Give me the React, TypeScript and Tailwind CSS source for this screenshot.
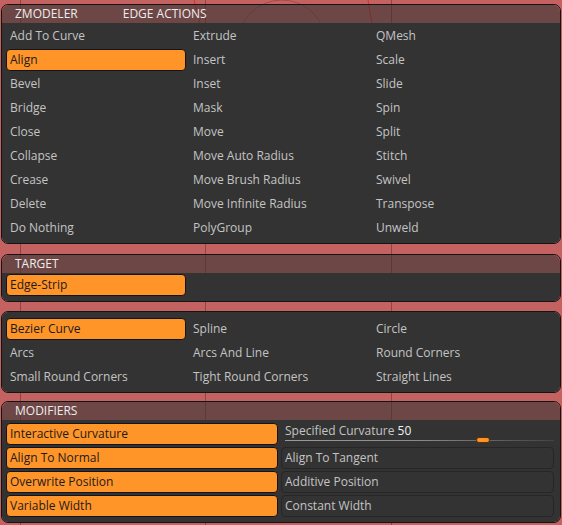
const edgeActions = [
  'Add To Curve', 'Extrude', 'QMesh',
  'Align', 'Insert', 'Scale',
  'Bevel', 'Inset', 'Slide',
  'Bridge', 'Mask', 'Spin',
  'Close', 'Move', 'Split',
  'Collapse', 'Move Auto Radius', 'Stitch',
  'Crease', 'Move Brush Radius', 'Swivel',
  'Delete', 'Move Infinite Radius', 'Transpose',
  'Do Nothing', 'PolyGroup', 'Unweld',
]

const curveTypes = [
  'Bezier Curve', 'Spline', 'Circle',
  'Arcs', 'Arcs And Line', 'Round Corners',
  'Small Round Corners', 'Tight Round Corners', 'Straight Lines',
]

const modifiers = [
  { on: 'Interactive Curvature', off: null },
  { on: 'Align To Normal', off: 'Align To Tangent' },
  { on: 'Overwrite Position', off: 'Additive Position' },
  { on: 'Variable Width', off: 'Constant Width' },
]

function Item({ label, active }: { label: string; active?: boolean }) {
  return (
    <div className="h-[24px] py-[1px]">
      <div
        className={
          active
            ? 'h-[22px] flex items-center pl-[3px] rounded-[4px] border border-[#141414] bg-[#ff9428] text-[#1b1b1b]'
            : 'h-[22px] flex items-center pl-[3px] border border-transparent text-[#c4c4c4]'
        }
      >
        {label}
      </div>
    </div>
  )
}

function Header({ title, sub }: { title: string; sub?: string }) {
  return (
    <div className="h-[18px] flex items-center bg-[#333333]/60 rounded-t-[7px] text-[#ededed] pl-[13px] gap-[45px]">
      <span>{title}</span>
      {sub && <span>{sub}</span>}
    </div>
  )
}

function Panel({ children, className = '' }: { children: React.ReactNode; className?: string }) {
  return (
    <div className={`w-[560px] ml-[1px] border border-[#141414] rounded-[7px] overflow-hidden ${className}`}>
      {children}
    </div>
  )
}

function Backdrop() {
  return (
    <svg className="absolute inset-0" width="562" height="525" viewBox="0 0 562 525">
      <line x1="20.5" y1="0" x2="20.5" y2="525" stroke="#8e4545" strokeWidth="1" />
      <line x1="205.5" y1="0" x2="205.5" y2="525" stroke="#8e4545" strokeWidth="1" />
      <line x1="391.5" y1="0" x2="391.5" y2="525" stroke="#8e4545" strokeWidth="1" />
      <circle cx="282" cy="44" r="44" fill="none" stroke="#a84a4a" strokeWidth="1" />
      <path d="M194 0 Q197 12 200 24" fill="none" stroke="#e02c2c" strokeWidth="1" />
      <path d="M368 0 Q370 12 372 24" fill="none" stroke="#e02c2c" strokeWidth="1" />
    </svg>
  )
}

export default function App() {
  return (
    <div
      className="relative w-[562px] h-[525px] bg-[#c46262] overflow-hidden text-[12px] leading-none"
      style={{ fontFamily: '"Open Sans", "Noto Sans", sans-serif' }}
    >
      <Backdrop />
      <div className="relative flex flex-col pt-[4px]">
        <Panel>
          <Header title="ZMODELER" sub="EDGE ACTIONS" />
          <div className="bg-[#333333] pt-[1px] pb-[3px] pl-[4px] grid grid-cols-[180px_180px_180px] gap-x-[3px]">
            {edgeActions.map((a) => (
              <Item key={a} label={a} active={a === 'Align'} />
            ))}
          </div>
        </Panel>

        <Panel className="mt-[10px]">
          <Header title="TARGET" />
          <div className="bg-[#333333] pt-[0px] pb-[4px] pl-[4px] grid grid-cols-[180px_180px_180px] gap-x-[3px]">
            <Item label="Edge-Strip" active />
          </div>
        </Panel>

        <Panel className="mt-[9px]">
          <div className="bg-[#333333] pt-[5px] pb-[3px] pl-[4px] grid grid-cols-[180px_180px_180px] gap-x-[3px]">
            {curveTypes.map((c) => (
              <Item key={c} label={c} active={c === 'Bezier Curve'} />
            ))}
          </div>
        </Panel>

        <Panel className="mt-[8px]">
          <Header title="MODIFIERS" />
          <div className="bg-[#333333] pt-[2px] pb-[4px] pl-[4px] grid grid-cols-[272px_273px] gap-x-[3px]">
            {modifiers.map((m) => (
              <div key={m.on} className="contents">
                <Item label={m.on} active />
                {m.off ? (
                  <div className="h-[24px] py-[1px]">
                    <div className="h-[22px] flex items-center pl-[3px] rounded-[4px] border border-[#262626] text-[#c4c4c4]">
                      {m.off}
                    </div>
                  </div>
                ) : (
                  <div className="h-[24px] relative">
                    <div className="pl-[4px] pt-[3px] text-[#c4c4c4]">
                      Specified Curvature <span className="text-[#f0f0f0]">50</span>
                    </div>
                    <div className="absolute left-[4px] right-0 top-[18px] h-[1px] bg-gradient-to-r from-[#9a9a9a] via-[#8a8a8a] to-[#444444]" />
                    <div className="absolute left-[195px] top-[15px] w-[14px] h-[6px] rounded-full bg-[#ff9428] border border-[#5a3000]" />
                  </div>
                )}
              </div>
            ))}
          </div>
        </Panel>
      </div>
    </div>
  )
}
